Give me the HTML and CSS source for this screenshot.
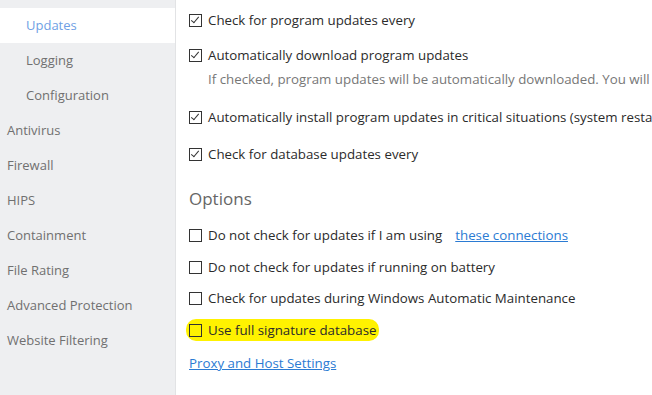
FILE: index.html
```html
<!DOCTYPE html>
<html lang="en">
<head>
    <meta charset="UTF-8">
    <title>Updates</title>
    <link rel="stylesheet" href="styles.css">
</head>
<body>
    <div class="layout">
        <!-- Sidebar -->
        <div class="sidebar">
            <div class="nav-item sub active">Updates</div>
            <div class="nav-item sub">Logging</div>
            <div class="nav-item sub">Configuration</div>
            <div class="nav-item">Antivirus</div>
            <div class="nav-item">Firewall</div>
            <div class="nav-item">HIPS</div>
            <div class="nav-item">Containment</div>
            <div class="nav-item">File Rating</div>
            <div class="nav-item">Advanced Protection</div>
            <div class="nav-item">Website Filtering</div>
        </div>

        <!-- Settings -->
        <div class="content">
            <div class="opt r1"><span class="box checked"></span>Check for program updates every</div>
            <div class="opt r2"><span class="box checked"></span>Automatically download program updates</div>
            <div class="desc">If checked, program updates will be automatically downloaded. You will still need to confirm the installation</div>
            <div class="opt r3"><span class="box checked"></span>Automatically install program updates in critical situations (system restart required)</div>
            <div class="opt r4"><span class="box checked"></span>Check for database updates every</div>

            <h2 class="heading">Options</h2>

            <div class="opt r5"><span class="box"></span>Do not check for updates if I am using<a href="#" class="inline-link">these connections</a></div>
            <div class="opt r6"><span class="box"></span>Do not check for updates if running on battery</div>
            <div class="opt r7"><span class="box"></span>Check for updates during Windows Automatic Maintenance</div>
            <div class="opt r8 marked"><span class="box"></span>Use full signature database</div>

            <a href="#" class="link">Proxy and Host Settings</a>
        </div>
    </div>
</body>
</html>
```

FILE: styles.css
```css
body {
    margin: 0;
    font-family: "Open Sans", "Noto Sans", sans-serif;
    font-size: 13.3px;
    color: #2b2b2b;
    background-color: #fff;
    overflow: hidden;
}
.layout {
    display: flex;
    height: 395px;
}
.sidebar {
    width: 175px;
    flex-shrink: 0;
    padding-top: 8px;
    background-color: #eeeff1;
    border-right: 1px solid #e2e3e5;
    font-size: 13px;
}
.nav-item {
    height: 35px;
    display: flex;
    align-items: center;
    padding-left: 7px;
    padding-bottom: 1px;
    box-sizing: border-box;
    color: #707070;
}
.nav-item.sub {
    padding-left: 26px;
}
.nav-item.active {
    background-color: #fff;
    color: #6f9fe4;
}
.content {
    flex: 1;
    min-width: 0;
    padding: 5px 0 0 13px;
    display: flex;
    flex-direction: column;
    white-space: nowrap;
    overflow: hidden;
}
.opt {
    height: 30px;
    display: flex;
    align-items: center;
}
.box {
    width: 11px;
    height: 11px;
    border: 1px solid #333;
    margin-right: 6px;
    flex-shrink: 0;
    position: relative;
}
.box.checked::after {
    content: "";
    position: absolute;
    left: 3px;
    top: 0px;
    width: 3px;
    height: 7px;
    border-right: 1px solid #333;
    border-bottom: 1px solid #333;
    transform: rotate(40deg);
}
.r2 { margin-top: 5px; }
.desc {
    height: 18px;
    line-height: 18px;
    padding-left: 19px;
    color: #777;
}
.r3 { margin-top: 14px; }
.r4 { margin-top: 7px; }
.heading {
    margin: 18px 0 0 0;
    height: 24px;
    line-height: 24px;
    font-size: 17px;
    font-weight: normal;
    color: #666;
}
.r5 { margin-top: 9px; }
.r6 { margin-top: 2px; }
.r7 { margin-top: 1px; }
.r8 { margin-top: 2px; }
.marked {
    align-self: flex-start;
    height: 22px;
    margin-top: 6px;
    margin-left: -3px;
    padding: 0 3px;
    background-color: #fff200;
    border-radius: 10px;
}
.inline-link {
    margin-left: 13px;
    color: #2b7bd3;
}
.link {
    align-self: flex-start;
    margin-top: 12px;
    height: 20px;
    line-height: 20px;
    color: #2b7bd3;
}
```
